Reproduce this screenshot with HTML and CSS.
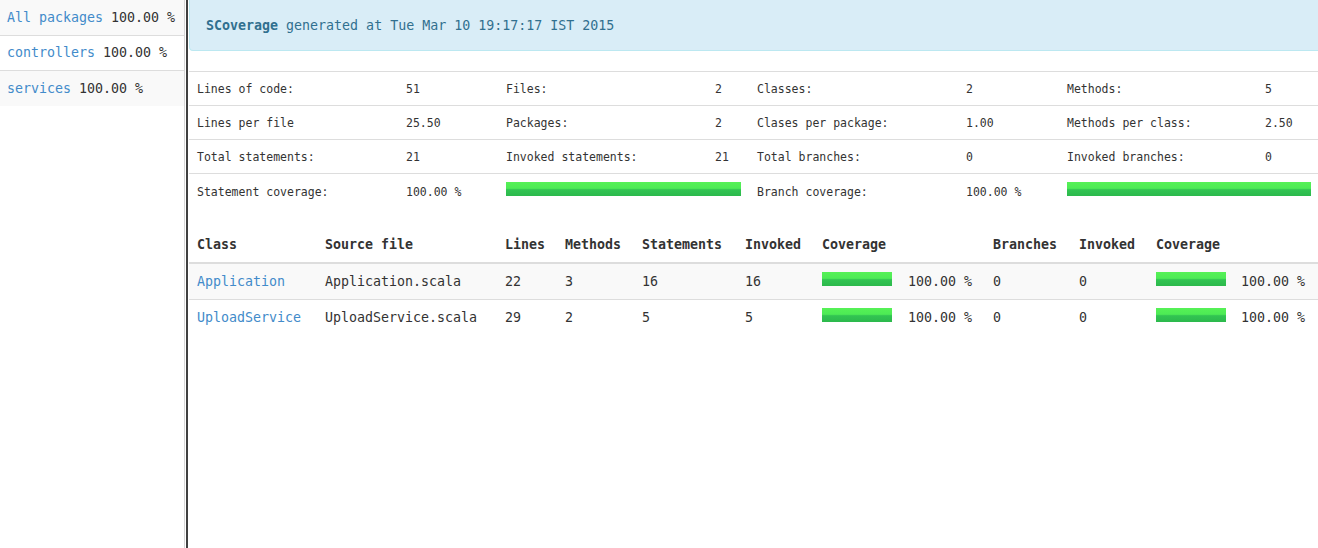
FILE: index.html
```html
<!DOCTYPE html>
<html>
<head>
<meta charset="utf-8">
<link rel="stylesheet" href="styles.css">
</head>
<body>
<div class="page">
  <aside class="sidebar">
    <table class="nav-table">
      <tr class="odd"><td><a href="#">All packages</a> 100.00 %</td></tr>
      <tr class="mid"><td><a href="#">controllers</a> 100.00 %</td></tr>
      <tr class="odd"><td><a href="#">services</a> 100.00 %</td></tr>
    </table>
  </aside>
  <div class="divider"></div>
  <main class="main">
    <div class="alert"><b>SCoverage</b> generated at Tue Mar 10 19:17:17 IST 2015</div>
    <table class="stats">
      <colgroup>
        <col class="c209"><col class="c100"><col class="c209"><col class="c42">
        <col class="c209"><col class="c101"><col class="c198"><col class="c62">
      </colgroup>
      <tr>
        <td>Lines of code:</td><td>51</td><td>Files:</td><td>2</td>
        <td>Classes:</td><td>2</td><td>Methods:</td><td>5</td>
      </tr>
      <tr>
        <td>Lines per file</td><td>25.50</td><td>Packages:</td><td>2</td>
        <td>Clases per package:</td><td>1.00</td><td>Methods per class:</td><td>2.50</td>
      </tr>
      <tr>
        <td>Total statements:</td><td>21</td><td>Invoked statements:</td><td>21</td>
        <td>Total branches:</td><td>0</td><td>Invoked branches:</td><td>0</td>
      </tr>
      <tr class="bar-row">
        <td>Statement coverage:</td><td>100.00 %</td><td colspan="2"><div class="bar"></div></td>
        <td>Branch coverage:</td><td>100.00 %</td><td colspan="2"><div class="bar"></div></td>
      </tr>
    </table>
    <table class="classes">
      <colgroup>
        <col class="w128"><col class="w180"><col class="w60"><col class="w77">
        <col class="w103"><col class="w77"><col class="w86"><col class="w85">
        <col class="w86"><col class="w77"><col class="w85"><col class="w86">
      </colgroup>
      <thead>
        <tr>
          <th>Class</th><th>Source file</th><th>Lines</th><th>Methods</th>
          <th>Statements</th><th>Invoked</th><th colspan="2">Coverage</th>
          <th>Branches</th><th>Invoked</th><th colspan="2">Coverage</th>
        </tr>
      </thead>
      <tbody>
        <tr class="odd">
          <td><a href="#">Application</a></td><td>Application.scala</td><td>22</td><td>3</td>
          <td>16</td><td>16</td><td><div class="bar small"></div></td><td>100.00 %</td>
          <td>0</td><td>0</td><td><div class="bar small"></div></td><td>100.00 %</td>
        </tr>
        <tr>
          <td><a href="#">UploadService</a></td><td>UploadService.scala</td><td>29</td><td>2</td>
          <td>5</td><td>5</td><td><div class="bar small"></div></td><td>100.00 %</td>
          <td>0</td><td>0</td><td><div class="bar small"></div></td><td>100.00 %</td>
        </tr>
      </tbody>
    </table>
  </main>
</div>
</body>
</html>
```
FILE: styles.css
```css
html, body {
  margin: 0;
  padding: 0;
  background: #fff;
  overflow: hidden;
}
body {
  font-family: "DejaVu Sans Mono", monospace;
  font-size: 13.3px;
  line-height: 19px;
  color: #333;
}
a {
  color: #428bca;
  text-decoration: none;
}
.page {
  display: flex;
  height: 548px;
  width: 1330px;
}
.sidebar {
  width: 184px;
  flex: 0 0 184px;
  border-right: 1px solid #d6d6d6;
}
.divider {
  flex: 0 0 2px;
  width: 2px;
  margin: 0 1px;
  background: #404040;
}
.main {
  flex: 0 0 1130px;
  width: 1130px;
}
table {
  border-collapse: separate;
  border-spacing: 0;
}
.nav-table {
  width: 100%;
}
.nav-table td {
  padding: 8px 7px;
  border-top: 1px solid #ddd;
  white-space: nowrap;
}
.nav-table tr:first-child td {
  border-top: 0;
}
.nav-table .mid td {
  padding-top: 7px;
  padding-bottom: 8px;
}
.odd td {
  background: #f9f9f9;
}
.alert {
  background: #d9edf7;
  border: 1px solid #bce8f1;
  border-top: 0;
  border-radius: 0 0 4px 4px;
  color: #31708f;
  padding: 16px 16px 15px;
  margin-bottom: 20px;
  margin-right: -4px;
}
.stats {
  width: 1130px;
  table-layout: fixed;
  font-size: 11.5px;
  line-height: 17px;
  margin-bottom: 20px;
}
.stats td {
  padding: 9px 8px 7px;
  border-top: 1px solid #ddd;
  vertical-align: top;
  white-space: nowrap;
}
.stats .bar-row td {
  padding: 10px 8px 6px;
}
.stats .bar-row .bar {
  margin-top: -2px;
}
.c209 { width: 209px; }
.c100 { width: 100px; }
.c42 { width: 42px; }
.c101 { width: 101px; }
.c198 { width: 198px; }
.c62 { width: 62px; }
.bar {
  height: 14px;
  background: linear-gradient(to bottom, #56f156 0%, #4deb55 45%, #32c452 55%, #2cb94c 100%);
}
.bar.small {
  width: 70px;
}
.classes {
  width: 1130px;
  table-layout: fixed;
}
.classes th {
  text-align: left;
  font-weight: bold;
  padding: 8px;
  border-bottom: 2px solid #ddd;
  white-space: nowrap;
}
.classes td {
  padding: 8px;
  border-top: 1px solid #ddd;
  vertical-align: top;
  white-space: nowrap;
}
.classes tbody tr:first-child td {
  border-top: 0;
}
.w128 { width: 128px; }
.w180 { width: 180px; }
.w60 { width: 60px; }
.w77 { width: 77px; }
.w103 { width: 103px; }
.w86 { width: 86px; }
.w85 { width: 85px; }
```
